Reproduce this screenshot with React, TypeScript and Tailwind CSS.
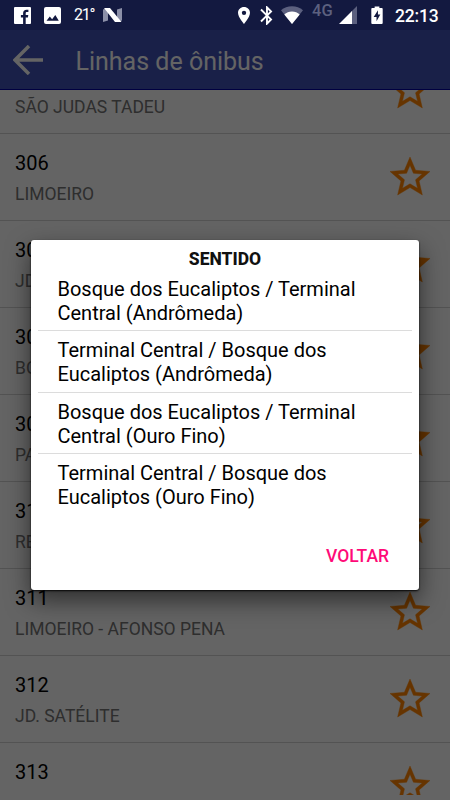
type Line = {
  code: string;
  name: string;
  filled?: boolean;
};

const lines: Line[] = [
  { code: "305", name: "SÃO JUDAS TADEU" },
  { code: "306", name: "LIMOEIRO" },
  { code: "307", name: "JD.", filled: true },
  { code: "308", name: "BOSQUE", filled: true },
  { code: "309", name: "PARQUE", filled: true },
  { code: "310", name: "RESIDENCIAL" },
  { code: "311", name: "LIMOEIRO - AFONSO PENA" },
  { code: "312", name: "JD. SATÉLITE" },
  { code: "313", name: "" },
];

const directions = [
  "Bosque dos Eucaliptos / Terminal Central (Andrômeda)",
  "Terminal Central / Bosque dos Eucaliptos (Andrômeda)",
  "Bosque dos Eucaliptos / Terminal Central (Ouro Fino)",
  "Terminal Central / Bosque dos Eucaliptos (Ouro Fino)",
];

const Star = ({ filled }: { filled?: boolean }) => (
  <svg viewBox="0 0 24 24" className="size-12 shrink-0 fill-[#ff8300] stroke-[#ff8300]" strokeWidth="0.2">
    {filled ? (
      <path d="M12 17.27 18.18 21l-1.64-7.03L22 9.24l-7.19-.61L12 2 9.19 8.63 2 9.24l5.46 4.73L5.82 21z" />
    ) : (
      <path d="m22 9.24-7.19-.62L12 2 9.19 8.63 2 9.24l5.46 4.73L5.82 21 12 17.27 18.18 21l-1.63-7.03L22 9.24zM12 15.4l-3.76 2.27 1-4.28-3.32-2.88 4.38-.38L12 6.1l1.71 4.04 4.38.38-3.32 2.88 1 4.28L12 15.4z" />
    )}
  </svg>
);

const StatusBar = () => (
  <div className="relative z-20 flex h-[30px] items-center justify-between bg-[#131940] pr-[10px] pl-[14px] text-white">
    <div className="flex items-center">
      {/* facebook */}
      <svg viewBox="0 0 17 17" className="size-[17px]">
        <rect width="17" height="17" rx="1" fill="#fff" />
        <path d="M9.1 17v-6.5H6.9V8h2.2V6.2c0-2.3 1.3-3.5 3.4-3.5h1.9V5h-1.3c-1.1 0-1.4.5-1.4 1.4V8h2.6l-.4 2.5h-2.2V17z" fill="#131940" />
      </svg>
      {/* picture */}
      <svg viewBox="0 0 17 17" className="ml-[13px] size-[17px]">
        <rect width="17" height="17" rx="2" fill="#fff" />
        <path d="M2.5 13.8 5.8 9.5l2.3 2.7L11.3 8l3.5 5.8z" fill="#131940" />
      </svg>
      <span className="ml-[13px] w-[29px] text-[16px] leading-[20px] tracking-[-1.3px]">21°</span>
      {/* android N */}
      <svg viewBox="0 0 19 16" className="h-4 w-[19px]">
        <path d="M0 2.5 5 1v12.5L0 15z M14 2.5 19 1v12.5L14 15z" fill="#8c90a8" />
        <path d="M1 1h6l11.5 14H12z" fill="#fff" />
      </svg>
    </div>
    <div className="flex items-center">
      <svg viewBox="0 0 14 20" className="h-[19px] w-[14px]">
        <path d="M7 1C3.500 1 .7 3.800.7 7.200.7 12 7 19 7 19s6.300-7 6.300-11.800C13.300 3.800 10.500 1 7 1zm0 8.500a2.300 2.300 0 1 1 0-4.600 2.300 2.300 0 0 1 0 4.600z" fill="#fff" />
      </svg>
      <svg viewBox="5 2 13 20" className="ml-[9px] h-[19px] w-[13px]">
        <path d="M17.710 7.710 12 2h-1v7.590L6.410 5 5 6.410 10.590 12 5 17.590 6.410 19 11 14.410V22h1l5.710-5.710-4.300-4.290 4.300-4.290zM13 5.830l1.880 1.880L13 9.590V5.830zm1.880 10.460L13 18.170v-3.760l1.880 1.880z" fill="#fff" />
      </svg>
      <svg viewBox="0 0 22 18" className="ml-[8px] h-[18px] w-[22px]">
        <path d="M11 18 0 4.300C3 1.800 6.800.3 11 .3s8 1.500 11 4z" fill="#5c607f" />
        <path d="M11 18 3.300 8.400C5.400 6.600 8 5.500 11 5.500s5.600 1.100 7.700 2.900z" fill="#fff" />
      </svg>
      <span className="mb-[7px] ml-[9px] w-[21px] text-[16.5px] leading-none font-medium text-[#5c607f]">4G</span>
      <svg viewBox="0 0 18 18" className="ml-[6px] size-[18px]">
        <path d="M12.5 5.5 18 0v18h-5.5z" fill="#5c607f" />
        <path d="M0 18 13 5v13z" fill="#fff" />
      </svg>
      <svg viewBox="0 0 12 19" className="ml-[14px] h-[18px] w-[12px]">
        <path d="M1 2h2.5V.5h5V2H11c.6 0 1 .4 1 1v15c0 .6-.4 1-1 1H1c-.6 0-1-.4-1-1V3c0-.6.4-1 1-1z" fill="#fff" />
        <path d="M7 4.500 2.500 11.500h3V16l4-7H7z" fill="#131940" />
      </svg>
      <span className="ml-[12px] w-[45px] pt-px text-[17.5px] leading-[20px] font-medium tracking-[-0.2px]">22:13</span>
    </div>
  </div>
);

const LineRow = ({ code, name, filled }: Line) => (
  <div className="flex h-[87px] shrink-0 items-start justify-between border-b border-[#d0d0d0] pr-4 pl-[15px]">
    <div className="pt-[17px]">
      <div className="text-[20px] leading-[24px] text-black">{code}</div>
      <div className="mt-[8px] text-[17.5px] leading-[22px] text-[#737373]">{name}</div>
    </div>
    <div className="pt-[19px]">
      <Star filled={filled} />
    </div>
  </div>
);

const DirectionDialog = () => (
  <div className="flex h-[350px] w-[388px] flex-col rounded-[3px] bg-white px-[7px] shadow-[0_10px_24px_rgba(0,0,0,0.55),0_1px_2px_rgba(0,0,0,0.9)]">
    <h2 className="pt-[9px] text-center text-[17.5px] leading-[20px] font-extrabold text-[#111]">SENTIDO</h2>
    <ul className="mt-[1px] divide-y divide-[#dcdcdc]">
      {directions.map((direction) => (
        <li key={direction} className="h-[61.25px] pt-[7px] pr-4 pl-[19.5px] text-[20px] leading-[24px] text-black">
          {direction}
        </li>
      ))}
    </ul>
    <div className="mt-auto flex justify-end pr-[23px] pb-[23px]">
      <button className="text-[17.5px] leading-[22px] font-medium text-[#ff0a78]">VOLTAR</button>
    </div>
  </div>
);

export default function App() {
  return (
    <div className="relative flex h-[800px] w-[450px] flex-col overflow-hidden bg-[#fafafa] font-[Roboto,sans-serif]">
      <StatusBar />
      <header className="flex h-[60px] shrink-0 items-center border-b border-[#0000a0] bg-[#3f51b5]">
        <svg viewBox="0 0 30 30" className="ml-[13px] size-[30px]" fill="none" stroke="#fafafa" strokeWidth="3.5">
          <path d="M30 15H2.5M16 1 2 15l14 14" />
        </svg>
        <h1 className="ml-[32.5px] pt-[5px] text-[25px] text-[#fafafa]">Linhas de ônibus</h1>
      </header>
      <main className="flex h-[705px] shrink-0 flex-col overflow-hidden">
        <div className="-mt-[43px] flex flex-col">
          {lines.map((line) => (
            <LineRow key={line.code} {...line} />
          ))}
        </div>
      </main>
      {/* scrim + dialog, status bar stays on top */}
      <div className="absolute inset-0 z-10 flex justify-center bg-black/60 pt-[240px]">
        <DirectionDialog />
      </div>
    </div>
  );
}
